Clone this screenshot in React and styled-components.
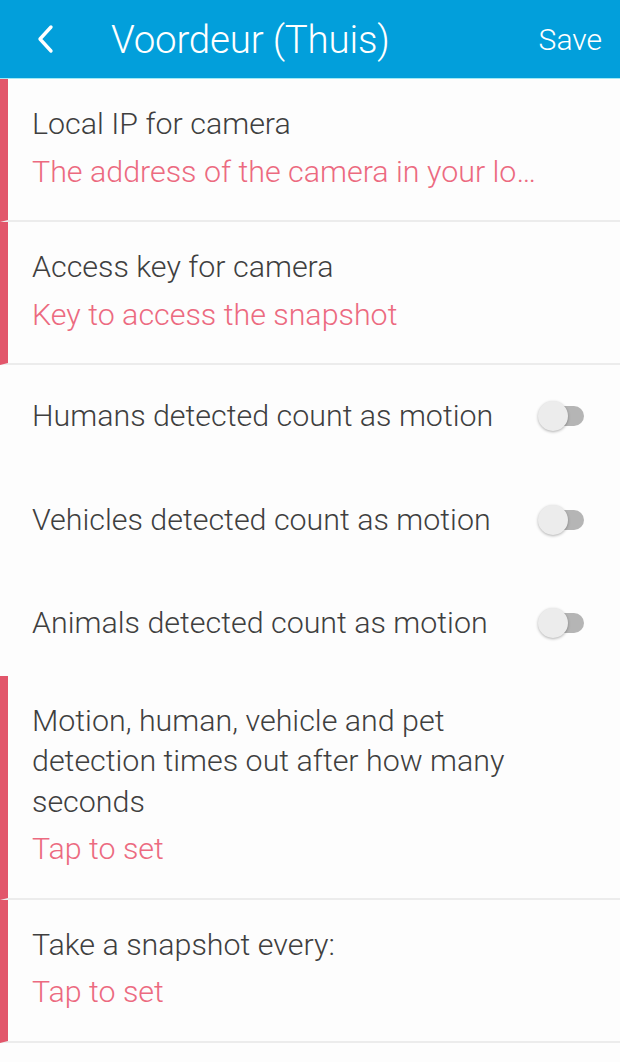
import React from 'react';
import styled, { createGlobalStyle } from 'styled-components';

const GlobalStyle = createGlobalStyle`
	html, body {
		margin: 0;
		padding: 0;
		background: #fdfdfd;
	}
	body {
		font-family: Roboto, 'Noto Sans', sans-serif;
	}
`;

const Screen = styled.div`
	width: 620px;
	min-height: 1062px;
	background: #fdfdfd;
`;

const Header = styled.header`
	height: 78px;
	background: #029fdb;
	border-bottom: 1px solid #9fe9f5;
	display: flex;
	align-items: center;
	color: #fff;
	padding: 0 18px 0 30px;
	box-sizing: content-box;

	h1 {
		flex: 1;
		margin: 0 0 0 51px;
		font-size: 38.5px;
		font-weight: 300;
		letter-spacing: -0.2px;
	}
`;

const BackButton = styled.button`
	background: none;
	border: 0;
	padding: 0;
	width: 30px;
	height: 36px;
	display: flex;
	align-items: center;
	justify-content: center;
`;

const SaveButton = styled.button`
	background: none;
	border: 0;
	padding: 0;
	color: #fff;
	font-family: inherit;
	font-size: 30px;
	font-weight: 300;
`;

const List = styled.ul`
	list-style: none;
	margin: 0;
	padding: 0;
`;

const Row = styled.li`
	display: flex;
	align-items: center;
	justify-content: space-between;
	padding: ${(p) => (p.$toggle ? '31px 36px 32px 24px' : '25px 32px 28px 24px')};
	border-left: 8px solid ${(p) => (p.$required ? '#e2566b' : 'transparent')};
	border-bottom: ${(p) => (p.$divider ? '2px solid #ececec' : '0')};
	background: #fdfdfd;
`;

const Text = styled.div`
	display: flex;
	flex-direction: column;
	gap: 7px;
	max-width: 530px;
	min-width: 0;
`;

const Title = styled.span`
	font-size: 30.4px;
	line-height: 40.5px;
	color: #3f3f3f;
	font-weight: 300;
	max-width: 500px;
`;

// long hints are cut with an ellipsis, as in the app
const Hint = styled.span`
	font-size: 30.4px;
	line-height: 40.5px;
	color: #ec6a80;
	font-weight: 300;
	white-space: nowrap;
	overflow: hidden;
	text-overflow: ellipsis;
	max-width: 509px;
`;

const Switch = styled.div`
	position: relative;
	width: 46px;
	height: 30px;
	flex-shrink: 0;

	&::before {
		content: '';
		position: absolute;
		left: 10px;
		top: 5px;
		width: 36px;
		height: 20px;
		border-radius: 10px;
		background: #b5b5b5;
	}

	&::after {
		content: '';
		position: absolute;
		left: 0;
		top: 0;
		width: 30px;
		height: 30px;
		border-radius: 50%;
		background: #ececec;
		box-shadow: 0 1px 3px rgba(0, 0, 0, 0.3);
	}
`;

const settings = [
	{ title: 'Local IP for camera', hint: 'The address of the camera in your local network', required: true, divider: true },
	{ title: 'Access key for camera', hint: 'Key to access the snapshot', required: true, divider: true },
	{ title: 'Humans detected count as motion', toggle: true },
	{ title: 'Vehicles detected count as motion', toggle: true },
	{ title: 'Animals detected count as motion', toggle: true },
	{
		title: 'Motion, human, vehicle and pet detection times out after how many seconds',
		hint: 'Tap to set',
		required: true,
		divider: true,
	},
	{ title: 'Take a snapshot every:', hint: 'Tap to set', required: true, divider: true },
];

const App = () => {
	return (
		<Screen>
			<GlobalStyle />
			<Header>
				<BackButton aria-label='Back'>
					<svg width='18' height='30' viewBox='0 0 18 30'>
						<path d='M15 3 L4 15 L15 27' fill='none' stroke='#fff' strokeWidth='3.4' strokeLinecap='round' strokeLinejoin='round' />
					</svg>
				</BackButton>
				<h1>Voordeur (Thuis)</h1>
				<SaveButton>Save</SaveButton>
			</Header>

			<List>
				{settings.map((s) => (
					<Row key={s.title} $toggle={s.toggle} $required={s.required} $divider={s.divider}>
						<Text>
							<Title>{s.title}</Title>
							{s.hint && <Hint>{s.hint}</Hint>}
						</Text>
						{s.toggle && <Switch />}
					</Row>
				))}
			</List>
		</Screen>
	);
};

export default App;
